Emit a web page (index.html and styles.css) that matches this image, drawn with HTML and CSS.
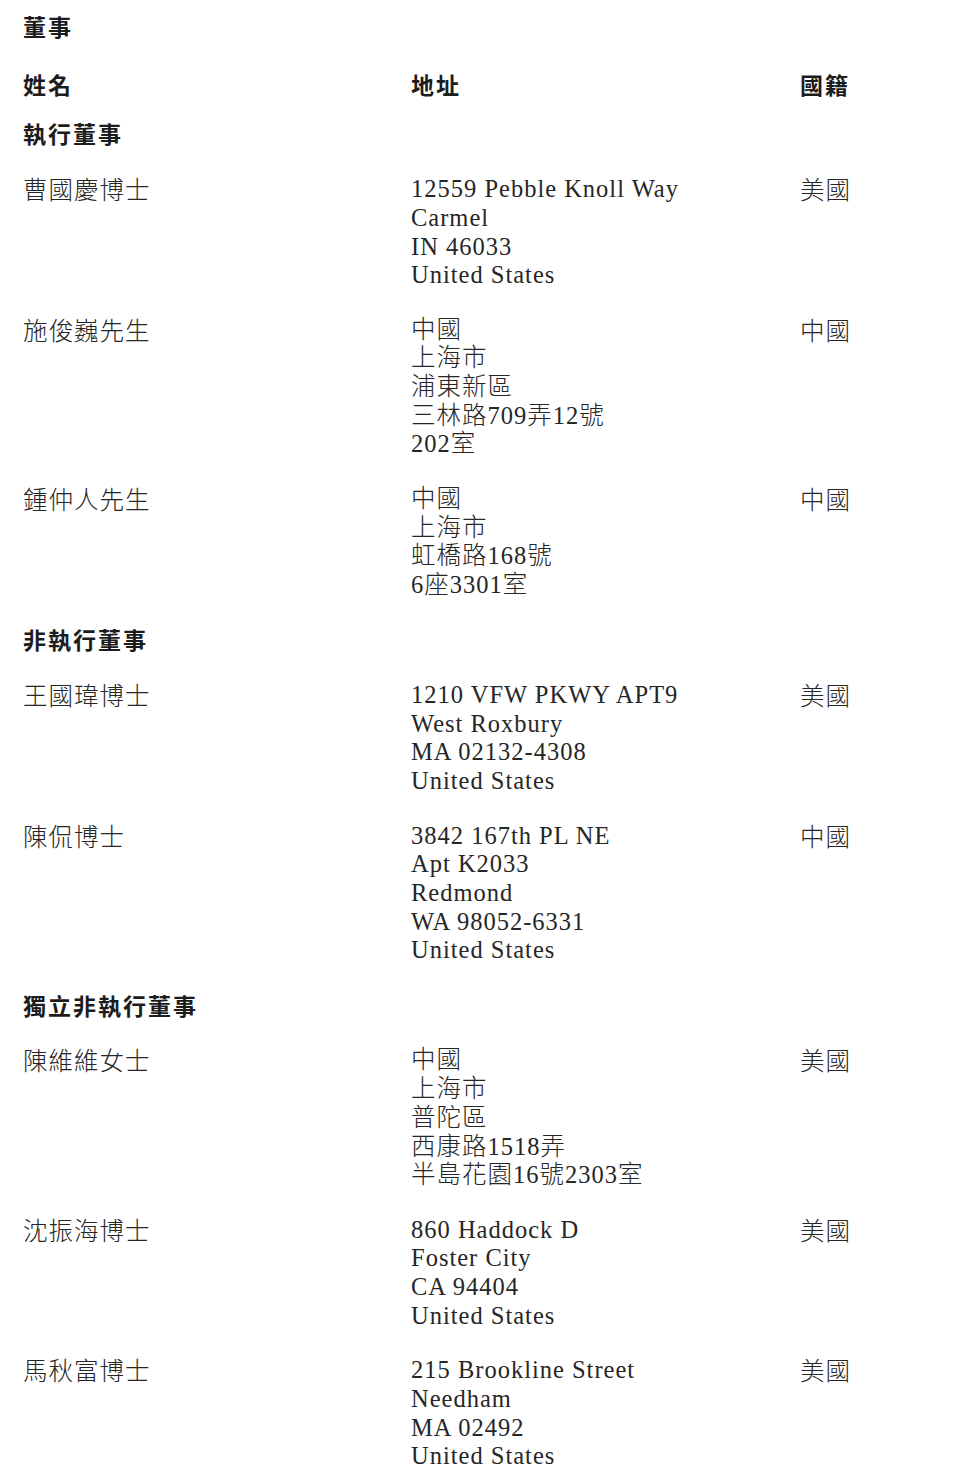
FILE: index.html
```html
<!DOCTYPE html>
<html lang="zh-Hant">
<head>
<meta charset="utf-8">
<title>董事</title>
<link rel="stylesheet" href="styles.css">
</head>
<body>
<main class="doc">
  <h1 class="title">董事</h1>
  <div class="grid head">
    <div>姓名</div>
    <div>地址</div>
    <div>國籍</div>
  </div>

  <h2 class="section">執行董事</h2>
  <div class="grid row">
    <div class="cjk">曹國慶博士</div>
    <div>12559 Pebble Knoll Way<br>Carmel<br>IN 46033<br>United States</div>
    <div class="cjk">美國</div>
  </div>
  <div class="grid row">
    <div class="cjk">施俊巍先生</div>
    <div>中國<br>上海市<br>浦東新區<br>三林路709弄12號<br>202室</div>
    <div class="cjk">中國</div>
  </div>
  <div class="grid row">
    <div class="cjk">鍾仲人先生</div>
    <div>中國<br>上海市<br>虹橋路168號<br>6座3301室</div>
    <div class="cjk">中國</div>
  </div>

  <h2 class="section">非執行董事</h2>
  <div class="grid row">
    <div class="cjk">王國瑋博士</div>
    <div>1210 VFW PKWY APT9<br>West Roxbury<br>MA 02132-4308<br>United States</div>
    <div class="cjk">美國</div>
  </div>
  <div class="grid row">
    <div class="cjk">陳侃博士</div>
    <div>3842 167th PL NE<br>Apt K2033<br>Redmond<br>WA 98052-6331<br>United States</div>
    <div class="cjk">中國</div>
  </div>

  <h2 class="section">獨立非執行董事</h2>
  <div class="grid row">
    <div class="cjk">陳維維女士</div>
    <div>中國<br>上海市<br>普陀區<br>西康路1518弄<br>半島花園16號2303室</div>
    <div class="cjk">美國</div>
  </div>
  <div class="grid row">
    <div class="cjk">沈振海博士</div>
    <div>860 Haddock D<br>Foster City<br>CA 94404<br>United States</div>
    <div class="cjk">美國</div>
  </div>
  <div class="grid row">
    <div class="cjk">馬秋富博士</div>
    <div>215 Brookline Street<br>Needham<br>MA 02492<br>United States</div>
    <div class="cjk">美國</div>
  </div>
</main>
</body>
</html>
```

FILE: styles.css
```css
html, body {
  margin: 0;
  padding: 0;
  background: #ffffff;
}

.doc {
  padding: 12px 0 0 23px;
  font-family: "Liberation Serif", "Noto Sans CJK TC", serif;
  font-size: 24.5px;
  line-height: 28.7px;
  letter-spacing: 1px;
  color: #262626;
}

.title,
.head,
.section {
  font-family: "Noto Sans CJK TC", "Noto Sans", sans-serif;
  font-weight: 700;
  font-size: 23px;
  letter-spacing: 2px;
  color: #1c1c1c;
  margin: 0;
}

.title {
  margin-bottom: 29px;
}

.head {
  margin-bottom: 21px;
}

.grid {
  display: grid;
  grid-template-columns: 388px 389px 1fr;
}

.row {
  margin-bottom: 25.7px;
  font-weight: 300;
}

.cjk {
  font-family: "Noto Sans CJK TC", sans-serif;
}

.section {
  margin-bottom: 27px;
}
```
